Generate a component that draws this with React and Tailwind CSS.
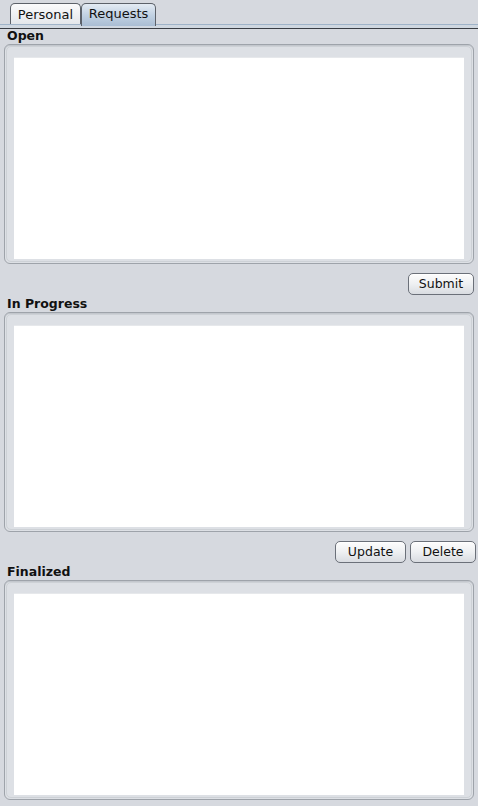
import React from "react";

const font = { fontFamily: '"DejaVu Sans", "Liberation Sans", sans-serif' };

function Panel() {
  return (
    <div className="mx-[4px] h-[220px] rounded-[6px] border border-[#9ea3aa] bg-[#dde0e5] p-[1px] shadow-[inset_0_1px_0_#c3c7cd]">
      <div className="h-full rounded-[5px] border border-[#cdd1d6] pt-[10px] pb-[2px] px-[7px]">
        <div className="h-full bg-white border-t border-[#e6e8eb]" />
      </div>
    </div>
  );
}

function Btn({ children, w }) {
  return (
    <button
      className="h-[22px] rounded-[5px] border border-[#6b7079] bg-gradient-to-b from-[#fdfdfd] via-[#eef0f2] to-[#d9dce1] text-[12.5px] leading-none text-[#111] shadow-[inset_0_1px_0_#ffffff]"
      style={{ ...font, width: w }}
    >
      {children}
    </button>
  );
}

function Label({ children, h }) {
  return (
    <div
      className="px-[7px] font-bold text-[12.5px] leading-[14px] text-[#111] flex items-end pb-[1px]"
      style={{ ...font, height: h }}
    >
      {children}
    </div>
  );
}

export default function App() {
  return (
    <div className="w-[478px] h-[806px] bg-[#d6d9df] overflow-hidden" style={font}>
      {/* tabs */}
      <div className="relative h-[29px]">
        <div className="absolute left-0 right-0 top-[24px] h-[1px] bg-[#9fb3c8]" />
        <div className="absolute left-0 right-0 top-[25px] h-[3px] bg-[#cfd7e0]" />
        <div className="absolute left-0 right-0 top-[28px] h-[1px] bg-[#3a3e44]" />
        <div className="absolute left-[10px] top-[3px] flex items-end">
          <div className="h-[21px] w-[71px] rounded-t-[5px] border border-b-0 border-[#5c6169] bg-gradient-to-b from-[#fbfbfc] to-[#e3e6ea] flex items-center justify-center text-[13px] text-[#111] pt-[1px]">
            Personal
          </div>
          <div className="relative z-10 h-[23px] w-[75px] -mb-[2px] rounded-t-[5px] border border-b-0 border-[#5c6169] bg-gradient-to-b from-[#e4ebf3] via-[#c2d2e3] to-[#a9bdd3] flex items-center justify-center text-[13px] text-[#111] pb-[2px]">
            Requests
          </div>
        </div>
      </div>

      <Label h={15}>Open</Label>
      <Panel />
      <div className="flex justify-end pr-[4px] pt-[9px]">
        <Btn w={66}>Submit</Btn>
      </div>
      <Label h={17}>In Progress</Label>
      <Panel />
      <div className="flex justify-end gap-[4px] pr-[2px] pt-[9px]">
        <Btn w={71}>Update</Btn>
        <Btn w={66}>Delete</Btn>
      </div>
      <Label h={17}>Finalized</Label>
      <Panel />
    </div>
  );
}
